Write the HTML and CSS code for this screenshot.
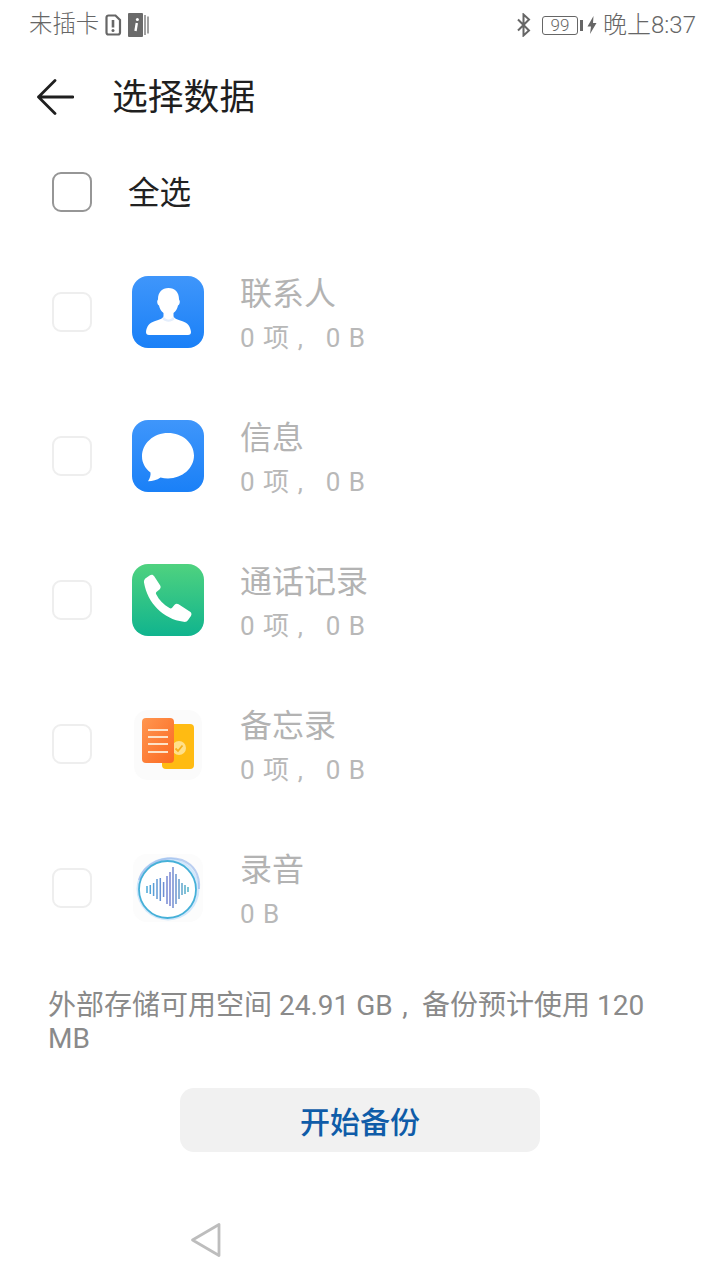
FILE: index.html
```html
<!DOCTYPE html>
<html lang="zh">
<head>
<meta charset="utf-8">
<title>选择数据</title>
<link rel="stylesheet" href="styles.css">
</head>
<body>
<div class="screen">
  <header class="status">
    <div class="status-group">
      <span class="carrier">未插卡</span>
      <svg class="ic-sim" viewBox="0 0 18 22"><path d="M2.500 3.500a2 2 0 0 1 2-2h7l4.500 4.500v12.500a2 2 0 0 1-2 2h-9.500a2 2 0 0 1-2-2z" fill="none" stroke="#666" stroke-width="2.200"/><path d="M9 6v7.500" stroke="#666" stroke-width="2.600"/><circle cx="9" cy="16.500" r="1.500" fill="#666"/></svg>
      <svg class="ic-info" viewBox="0 0 22 24"><rect width="15" height="24" rx="1" fill="#6a6a6a"/><path d="M17 2v20M20 3.500v17" stroke="#8a8a8a" stroke-width="1.600"/><path d="M8.800 10l-1.300 8" stroke="#fff" stroke-width="2.400"/><circle cx="9.400" cy="6.500" r="1.500" fill="#fff"/></svg>
    </div>
    <div class="status-group status-right">
      <svg class="ic-bt" viewBox="0 0 16 24"><path d="M2 6.500l11 11-5.500 5V1.500l5.500 5-11 11" fill="none" stroke="#666" stroke-width="2"/></svg>
      <div class="battery"><span class="battery-body">99</span><span class="battery-tip"></span></div>
      <svg class="ic-bolt" viewBox="0 0 10 18"><path d="M6.500 0L0.500 10.500h3.500L3 18l6.500-11H6z" fill="#666"/></svg>
      <span class="clock">晚上8:37</span>
    </div>
  </header>

  <div class="appbar">
    <svg class="ic-back" viewBox="0 0 38 36"><path d="M19 1.500L2.500 18 19 34.500M2.500 18H37" fill="none" stroke="#1f1f1f" stroke-width="2.800" stroke-linecap="round" stroke-linejoin="round"/></svg>
    <h1 class="title">选择数据</h1>
  </div>

  <label class="all-row">
    <span class="check check-on"></span>
    <span class="all-label">全选</span>
  </label>

  <ul class="list">
    <li class="row">
      <span class="check"></span>
      <svg class="app" viewBox="0 0 72 72">
        <defs><linearGradient id="blue" x1="0" y1="0" x2="0" y2="1"><stop offset="0" stop-color="#3f96fb"/><stop offset="1" stop-color="#1a80f7"/></linearGradient></defs>
        <rect width="72" height="72" rx="16" fill="url(#blue)"/>
        <path d="M36.500 12c-6.500 0-10.500 4.500-10.500 11 0 1-.8 1.200-.8 2.800 0 1.800.9 3.400 1.800 3.800.7 3 2 5.500 4.500 7.500v3.400c-1 2.500-5 3.500-9 4.700-5 1.500-8 5-8.500 10.800 0 2 1 3 3 3h39c2 0 3-1 3-3-.5-5.800-3.500-9.300-8.500-10.800-4-1.200-8-2.200-9-4.700v-3.400c2.500-2 3.800-4.500 4.500-7.500.9-.4 1.800-2 1.800-3.800 0-1.600-.8-1.800-.8-2.800 0-6.500-4-11-10.500-11z" fill="#fff"/>
        <path d="M31.500 40.500c1.500 2 3.200 3 5 3s3.500-1 5-3c.2 1 .6 1.800 1.200 2.500-1.600 1.700-4 2.800-6.200 2.800s-4.600-1.100-6.200-2.800c.6-.7 1-1.500 1.200-2.500z" fill="#e4eefc"/>
      </svg>
      <div class="info"><div class="name">联系人</div><div class="meta">0 项&#x2005;,&ensp;&#x2005;0 B</div></div>
    </li>
    <li class="row">
      <span class="check"></span>
      <svg class="app" viewBox="0 0 72 72">
        <rect width="72" height="72" rx="16" fill="url(#blue)"/>
        <path d="M36 13C21.500 13 10 23.500 10 36.500c0 6.500 3.400 12 8.500 16 .3 2.800-.5 5.800-2.500 8.800 4.500 0 9-1.300 12.500-3.800 2.400.6 5 .9 7.500.9 14.500 0 26-10.400 26-22.900S50.500 13 36 13z" fill="#fff"/>
      </svg>
      <div class="info"><div class="name">信息</div><div class="meta">0 项&#x2005;,&ensp;&#x2005;0 B</div></div>
    </li>
    <li class="row">
      <span class="check"></span>
      <svg class="app" viewBox="0 0 72 72">
        <defs><linearGradient id="green" x1="0" y1="0" x2="0" y2="1"><stop offset="0" stop-color="#4fd27f"/><stop offset="1" stop-color="#10b48e"/></linearGradient></defs>
        <rect width="72" height="72" rx="16" fill="url(#green)"/>
        <path d="M12 18.500c-.3-2 .6-3.500 2-4.500l4-2.700c1.600-1 3.200-.6 4.200 1l6 9.200c.8 1.400.5 2.900-.7 3.900l-2.800 2.300c-.8.700-1 1.600-.5 2.600 3 6 7.200 10.300 13.300 13.800 1 .5 1.900.4 2.600-.4l2.500-3c1.100-1.200 2.600-1.400 4-.5l11.500 7.600c1.500 1 1.800 2.700.8 4.200l-2.800 4c-1 1.400-2.500 2.200-4.500 1.800C31 55 15.500 39 12 18.500z" fill="#fff"/>
      </svg>
      <div class="info"><div class="name">通话记录</div><div class="meta">0 项&#x2005;,&ensp;&#x2005;0 B</div></div>
    </li>
    <li class="row">
      <span class="check"></span>
      <svg class="app" viewBox="0 0 72 72">
        <defs><linearGradient id="orange" x1="0" y1="0" x2="1" y2="1"><stop offset="0" stop-color="#ff9650"/><stop offset="1" stop-color="#fb6a22"/></linearGradient></defs>
        <rect x="2" y="2" width="68" height="70" rx="14" fill="#fbfbfb"/>
        <rect x="30" y="16" width="32" height="45" rx="4" fill="#ffbb12"/>
        <circle cx="47" cy="40" r="7" fill="#ffe08a"/>
        <path d="M43.500 40.500l2.500 2.500 4.500-5.500" fill="none" stroke="#f6b01a" stroke-width="1.800"/>
        <rect x="10" y="10" width="32" height="45" rx="4" fill="url(#orange)"/>
        <path d="M16 22h20M16 29h20M16 36h20M16 44h20" stroke="#fde3c8" stroke-width="2"/>
      </svg>
      <div class="info"><div class="name">备忘录</div><div class="meta">0 项&#x2005;,&ensp;&#x2005;0 B</div></div>
    </li>
    <li class="row">
      <span class="check"></span>
      <svg class="app" viewBox="0 0 72 72">
        <defs><linearGradient id="wave" x1="0" y1="0" x2="1" y2="0"><stop offset="0" stop-color="#4aa8d8"/><stop offset=".55" stop-color="#7a84d2"/><stop offset="1" stop-color="#4fb4c8"/></linearGradient></defs>
        <rect x="1" y="2" width="70" height="68" rx="14" fill="#fcfcfc"/>
        <circle cx="36" cy="37" r="31.500" fill="#d3e8fb"/>
        <path d="M7 28C12 12 32 2 50 8c12 5 18 15 17 29" fill="none" stroke="#8fb0ea" stroke-width="2" opacity=".6"/>
        <circle cx="35.500" cy="37.500" r="28.500" fill="#fff" stroke="#45b0d8" stroke-width="1.800"/>
        <path d="M15 34v7M18.300 33v9M21.600 31v13M25 27v20M28.300 26v23M31.600 30v15M35 24v28M38 20v34M41 15v41M44 22v30M47 27v20M50 31v12M53 33v9M56 35v5" stroke="url(#wave)" stroke-width="1.500" fill="none"/>
      </svg>
      <div class="info"><div class="name">录音</div><div class="meta">0 B</div></div>
    </li>
  </ul>

  <p class="storage">外部存储可用空间 24.91 GB&#x2004;,&ensp;备份预计使用 120 MB</p>

  <div class="action"><button class="primary">开始备份</button></div>

  <nav class="navbar">
    <svg class="ic-nav" viewBox="0 0 32 36"><path d="M29 2.500v31L2.500 18z" fill="none" stroke="#bdbdbd" stroke-width="2.800" stroke-linejoin="round"/></svg>
  </nav>
</div>
</body>
</html>
```
FILE: styles.css
```css
* { box-sizing: border-box; }
html, body { margin: 0; padding: 0; background: #fff; }
body { font-family: Roboto, "Noto Sans CJK SC", sans-serif; }
.screen { width: 720px; height: 1280px; overflow: hidden; display: flex; flex-direction: column; }

.status { height: 50px; padding: 0 24px 0 29px; display: flex; justify-content: space-between; align-items: center; color: #666; font-size: 24px; font-weight: 300; }
.status-group { display: flex; align-items: center; }
.carrier { font-size: 23.400px; margin-bottom: 6px; }
.clock { margin-bottom: 6px; }
.ic-sim { width: 18px; height: 22px; margin-left: 5px; }
.ic-info { width: 22px; height: 24px; margin-left: 6px; }
.ic-bt { width: 16px; height: 24px; margin-right: 10px; }
.battery { display: flex; align-items: center; }
.battery-body { width: 36px; height: 19px; border: 1px solid #666; border-radius: 3px; font-size: 17px; line-height: 17px; text-align: center; }
.battery-tip { width: 3px; height: 11px; margin-left: 2px; background: #666; }
.ic-bolt { width: 10px; height: 18px; margin: 0 6px 0 4px; }

.appbar { height: 94px; display: flex; align-items: center; padding-left: 36px; }
.ic-back { width: 38px; height: 36px; flex: none; }
.title { margin: 4px 0 0 38px; font-size: 35.800px; font-weight: 400; color: #1f1f1f; line-height: 1; }

.all-row { height: 96px; display: flex; align-items: center; padding-left: 52px; }
.all-label { margin: 0 0 4px 36px; font-size: 31.600px; color: #222; }
.check { width: 40px; height: 40px; flex: none; border: 2px solid #eeeeee; border-radius: 9px; background: #fff; }
.check-on { border-color: #969696; }

.list { margin: 0; padding: 0; list-style: none; }
.row { height: 144px; display: flex; align-items: center; padding-left: 52px; }
.app { width: 72px; height: 72px; flex: none; margin-left: 40px; }
.info { margin-left: 36px; padding-top: 3px; display: flex; flex-direction: column; gap: 6px; }
.name { font-size: 32px; line-height: 42px; color: #b3b3b3; }
.meta { font-size: 26px; line-height: 34px; color: #b8b8b8; letter-spacing: 1px; }

.storage { margin: 29px 48px 0; font-size: 28px; line-height: 33px; color: #8a8a8a; }

.action { margin-top: 33px; display: flex; justify-content: center; }
.primary { width: 360px; height: 64px; border: 0; border-radius: 14px; background: #f1f1f1; color: #0f5ca8; font: 500 30px Roboto, "Noto Sans CJK SC", sans-serif; }

.navbar { margin-top: 70px; padding-left: 190px; display: flex; }
.ic-nav { width: 32px; height: 36px; }
```
